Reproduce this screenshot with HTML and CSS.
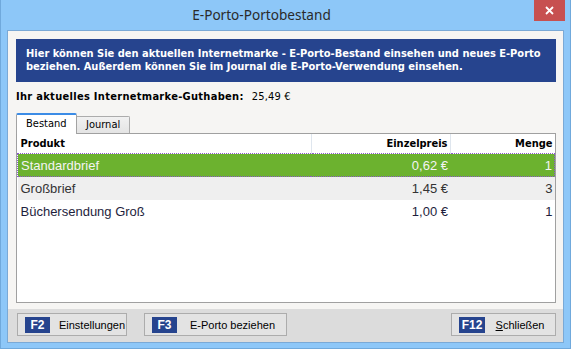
FILE: index.html
```html
<!DOCTYPE html>
<html lang="de">
<head>
  <meta charset="UTF-8">
  <title>E-Porto-Portobestand</title>
  <link rel="stylesheet" href="styles.css">
</head>
<body>
  <div class="fenster">
    <div class="titel">
      <span class="titeltext">E-Porto-Portobestand</span>
      <span class="schliessen">
        <svg width="9" height="9" viewBox="0 0 9 9"><path d="M1 1 L8 8 M8 1 L1 8" stroke="#fff" stroke-width="1.8"/></svg>
      </span>
    </div>
    <div class="client">
      <div class="inhalt">
        <div class="hinweis">Hier können Sie den aktuellen Internetmarke - E-Porto-Bestand einsehen und neues E-Porto beziehen. Außerdem können Sie im Journal die E-Porto-Verwendung einsehen.</div>
        <div class="guthaben"><strong>Ihr aktuelles Internetmarke-Guthaben:</strong><span class="betrag">25,49 €</span></div>
        <div class="reiter">
          <span class="tab aktiv">Bestand</span>
          <span class="tab">Journal</span>
        </div>
        <div class="liste">
          <table>
            <thead>
              <tr><th class="produkt">Produkt</th><th class="preis">Einzelpreis</th><th class="menge">Menge</th></tr>
            </thead>
            <tbody>
              <tr class="gewaehlt"><td>Standardbrief</td><td class="zahl">0,62 €</td><td class="zahl">1</td></tr>
              <tr class="grau"><td>Großbrief</td><td class="zahl">1,45 €</td><td class="zahl">3</td></tr>
              <tr><td>Büchersendung Groß</td><td class="zahl">1,00 €</td><td class="zahl">1</td></tr>
            </tbody>
          </table>
        </div>
      </div>
      <div class="fuss">
        <button class="knopf k-f2"><span class="taste">F2</span><span class="beschr">Einstellungen</span></button>
        <button class="knopf k-f3"><span class="taste">F3</span><span class="beschr">E-Porto beziehen</span></button>
        <button class="knopf k-f12"><span class="taste">F12</span><span class="beschr"><u>S</u>chließen</span></button>
      </div>
    </div>
  </div>
</body>
</html>
```

FILE: styles.css
```css
body { margin: 0; font-family: "DejaVu Sans Condensed", "DejaVu Sans", sans-serif; font-stretch: condensed; }
.fenster { width: 571px; height: 349px; box-sizing: border-box; background: #8dc7f8; border: 1px solid #70a9dc; border-top: none; }
.titel { height: 30px; display: flex; align-items: flex-start; }
.titeltext { flex: 1; text-align: center; padding-right: 12px; padding-top: 5px; font-family: "Noto Sans", sans-serif; font-stretch: normal; font-size: 13.6px; color: #2a2a2a; }
.schliessen { width: 31px; height: 21px; margin-right: 5px; background: #c75050; display: flex; align-items: center; justify-content: center; }
.client { margin: 0 6px; height: 313px; box-sizing: border-box; border: 1px solid #7aa9d6; background: #f6f5f3; display: flex; flex-direction: column; }
.inhalt { padding: 8px 7px 6px 8px; }
.hinweis { height: 43px; box-sizing: border-box; background: #26448e; color: #fff; font-weight: bold; font-size: 11px; line-height: 13px; padding: 8px 8px 0 10px; }
.guthaben { margin-top: 8px; height: 13px; font-size: 11px; line-height: 13px; color: #000; }
.guthaben strong { letter-spacing: 0.3px; }
.betrag { margin-left: 8px; letter-spacing: 0.2px; }
.reiter { margin-top: 10px; height: 20px; display: flex; align-items: flex-end; }
.tab { font-size: 11px; color: #000; box-sizing: border-box; }
.tab.aktiv { width: 61px; height: 21px; margin-bottom: -1px; position: relative; z-index: 1; background: #fff; border: 1px solid #a3a3a3; border-top: 2px solid #3c8ce6; border-bottom: none; padding: 2px 0 0 9px; border-radius: 2px 2px 0 0; }
.tab:not(.aktiv) { width: 54px; height: 17px; margin-left: -1px; background: linear-gradient(#f1f1f1, #e4e4e4); border: 1px solid #acacac; border-bottom: none; padding: 1px 0 0 9px; border-radius: 0 2px 0 0; }
.liste { height: 170px; box-sizing: border-box; background: #fff; border: 1px solid #a0a0a0; }
table { width: 100%; border-collapse: collapse; }
th { height: 19px; padding: 0 2px 0 3px; font-size: 11px; font-weight: bold; color: #000; border-right: 1px solid #dfe6ee; }
th.produkt { text-align: left; width: 288px; }
th.preis { text-align: right; width: 133px; }
th.menge { text-align: right; border-right: none; }
td { height: 23px; box-sizing: border-box; padding: 0 2px 0 3px; font-family: "Liberation Sans", Arial, sans-serif; font-stretch: normal; font-size: 13px; color: #1e1e3c; }
td.zahl { text-align: right; }
tr.grau td { background: #efefef; color: #333; }
tr.gewaehlt td { background: #6cb22f; color: #f4f4f4; border-top: 1px dotted #8c5cc8; border-bottom: 1px dotted #8c5cc8; }
tr.gewaehlt td:first-child { border-left: 1px dotted #8c5cc8; }
tr.gewaehlt td:last-child { border-right: 1px dotted #8c5cc8; }
.fuss { flex: 1; background: #dcdcdc; display: flex; align-items: flex-start; padding: 4px 7px 0 9px; gap: 17px; }
.knopf { height: 23px; box-sizing: border-box; border: 1px solid #acacac; background: #e3e3e3; display: flex; align-items: center; padding: 0 0 0 7px; margin: 0; font-family: "Liberation Sans", Arial, sans-serif; font-size: 11px; color: #000; }
.taste { width: 25px; height: 16px; background: #26448e; color: #fff; font-weight: bold; font-size: 12px; line-height: 16px; text-align: center; }
.k-f12 .taste { width: 26px; }
.beschr { flex: 1; text-align: center; }
.k-f2 .beschr { padding-left: 8px; }
.k-f3 .beschr { padding-left: 2px; }
.k-f2 { width: 110px; }
.k-f3 { width: 143px; }
.k-f12 { width: 105px; margin-left: auto; }
```
